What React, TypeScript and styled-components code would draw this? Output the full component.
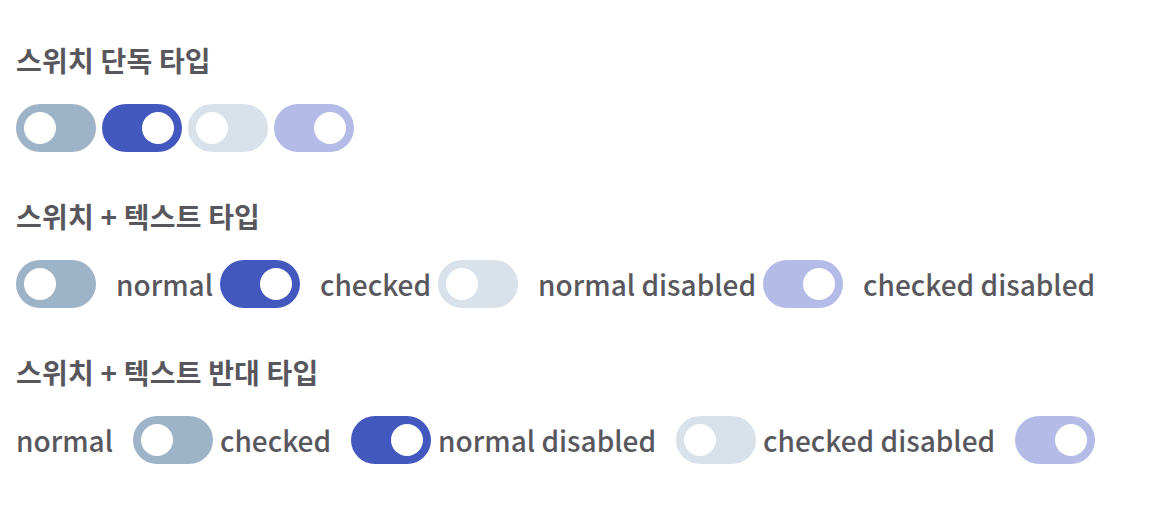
import styled, { createGlobalStyle } from 'styled-components';

const GlobalStyle = createGlobalStyle`
  html, body {
    margin: 0;
    padding: 0;
    background: #ffffff;
  }
  body {
    font-family: "Noto Sans CJK KR", "Noto Sans", sans-serif;
    color: #58575d;
  }
`;

const Page = styled.main`
  display: flex;
  flex-direction: column;
  gap: 46px;
  padding: 42px 16px 0;
`;

const Section = styled.section`
  display: flex;
  flex-direction: column;
  gap: 26px;
`;

const Title = styled.h2`
  margin: 0;
  font-size: 28px;
  line-height: 36px;
  font-weight: 600;
  letter-spacing: 0.2px;
  color: #58575d;
`;

const Row = styled.div<{ $gap: number }>`
  display: flex;
  align-items: center;
  gap: ${(p) => p.$gap}px;
`;

const Label = styled.label<{ $reverse?: boolean }>`
  display: flex;
  align-items: center;
  flex-direction: ${(p) => (p.$reverse ? 'row-reverse' : 'row')};
  gap: 20px;
  font-size: 28px;
  font-weight: 500;
  line-height: 48px;
  color: #58575d;
`;

type Kind = 'normal' | 'checked' | 'normal-disabled' | 'checked-disabled';

const trackColors: Record<Kind, string> = {
  normal: '#9db3c8',
  checked: '#4358bf',
  'normal-disabled': '#d9e1ea',
  'checked-disabled': '#b3bbe6',
};

const Track = styled.span<{ $kind: Kind }>`
  display: flex;
  align-items: center;
  justify-content: ${(p) => (p.$kind.startsWith('checked') ? 'flex-end' : 'flex-start')};
  flex: none;
  box-sizing: border-box;
  width: 80px;
  height: 48px;
  padding: 0 8px;
  border-radius: 24px;
  background: ${(p) => trackColors[p.$kind]};
`;

const Knob = styled.span`
  width: 32px;
  height: 32px;
  border-radius: 50%;
  background: #ffffff;
`;

const kinds: Kind[] = ['normal', 'checked', 'normal-disabled', 'checked-disabled'];
const labels: Record<Kind, string> = {
  normal: 'normal',
  checked: 'checked',
  'normal-disabled': 'normal disabled',
  'checked-disabled': 'checked disabled',
};

const Switch = ({ kind }: { kind: Kind }) => (
  <Track $kind={kind} role="switch" aria-checked={kind.startsWith('checked')}>
    <Knob />
  </Track>
);

export default function App() {
  return (
    <>
      <GlobalStyle />
      <Page>
        <Section>
          <Title>스위치 단독 타입</Title>
          <Row $gap={6}>
            {kinds.map((k) => (
              <Switch key={k} kind={k} />
            ))}
          </Row>
        </Section>
        <Section>
          <Title>스위치 + 텍스트 타입</Title>
          <Row $gap={7}>
            {kinds.map((k) => (
              <Label key={k}>
                <Switch kind={k} />
                {labels[k]}
              </Label>
            ))}
          </Row>
        </Section>
        <Section>
          <Title>스위치 + 텍스트 반대 타입</Title>
          <Row $gap={7}>
            {kinds.map((k) => (
              <Label key={k} $reverse>
                <Switch kind={k} />
                {labels[k]}
              </Label>
            ))}
          </Row>
        </Section>
      </Page>
    </>
  );
}
